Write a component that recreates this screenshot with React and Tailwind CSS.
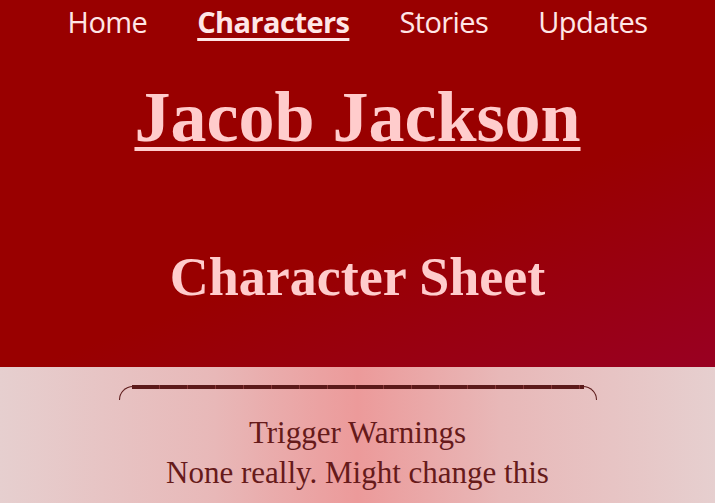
export default function App() {
  return (
    <div className="min-h-screen w-full bg-[linear-gradient(90deg,#e6cfcf_0%,#e8b8b8_30%,#ec9a9a_50%,#e8b8b8_70%,#e6cfcf_100%)]">
      {/* Header */}
      <header className="h-[367px] w-full bg-[linear-gradient(160deg,#990000_0%,#990000_60%,#990022_100%)] flex flex-col items-center">
        <nav className="flex items-center gap-[50px] h-[44px] font-['Open_Sans',sans-serif] text-[29px] text-[#ffe6e6]">
          <a className="tracking-[-0.02em]">Home</a>
          <a className="font-bold underline underline-offset-[5px] decoration-[3px] tracking-[-0.02em]">Characters</a>
          <a className="tracking-[-0.02em]">Stories</a>
          <a className="tracking-[-0.02em]">Updates</a>
        </nav>
        <h1 className="mt-[28px] font-['Liberation_Serif',serif] font-bold text-[72px] leading-[90px] text-[#ffcccc] underline underline-offset-[6px] decoration-[4px]">
          Jacob Jackson
        </h1>
        <h2 className="mt-[83px] font-['Liberation_Serif',serif] font-bold text-[54px] leading-[64px] text-[#ffcccc]">
          Character Sheet
        </h2>
      </header>

      {/* Content */}
      <section className="flex flex-col items-center pt-[19px]">
        <div className="relative w-[478px] h-[14px] rounded-t-[16px] border-t border-x border-[#5c1a1a]">
          <div className="absolute left-[12px] right-[12px] top-[-2px] h-[4px] bg-[repeating-linear-gradient(90deg,#5c1a1a_0px,#5c1a1a_27px,#8a3a3a_27px,#8a3a3a_28px)]" />
        </div>
        <p className="mt-[13px] font-['Liberation_Serif',serif] text-[31px] leading-[40px] text-[#661a1a]">
          Trigger Warnings
        </p>
        <p className="font-['Liberation_Serif',serif] text-[31px] leading-[40px] text-[#661a1a]">
          None really. Might change this
        </p>
      </section>
    </div>
  );
}
